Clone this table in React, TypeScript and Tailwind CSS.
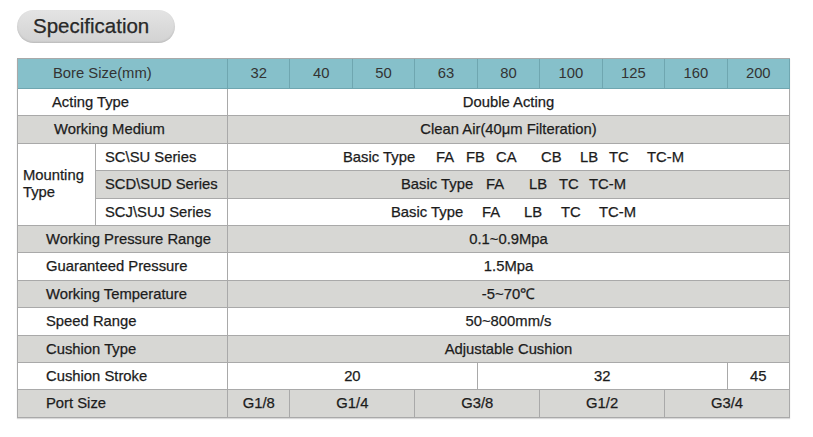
import React from "react";

const bores = ["32", "40", "50", "63", "80", "100", "125", "160", "200"];

const line = "border-r border-b border-[#a9a9a9]";
const gray = "bg-[#d7d7d4]";

function Label({ text, bg, pl = "pl-[28px]" }: { text: string; bg: string; pl?: string }) {
  return (
    <div className={`col-span-2 flex items-center ${pl} ${bg} ${line}`}>{text}</div>
  );
}

function Value({ text, bg }: { text: string; bg: string }) {
  return <div className={`col-span-9 flex items-center justify-center ${bg} ${line}`}>{text}</div>;
}

function Types({ items, start }: { items: [string, number][]; start: number }) {
  // items: [text, x position on the page]
  return (
    <div className="relative h-full">
      {items.map(([t, x]) => (
        <span key={t + x} className="absolute top-1/2 -translate-y-1/2 whitespace-nowrap" style={{ left: x - start }}>
          {t}
        </span>
      ))}
    </div>
  );
}

export default function App() {
  return (
    <div className="w-[813px] h-[437px] bg-white text-[#1c1c1c] text-[14.8px] [-webkit-text-stroke:0.25px_#1c1c1c] font-['Liberation_Sans',Arial,sans-serif]">
      <div className="pt-[10px] pl-[17px]">
        <div className="w-[158px] h-[33px] rounded-full bg-gradient-to-b from-[#e4e4e4] to-[#d2d2d2] shadow-[inset_0_-1px_2px_rgba(0,0,0,0.12)] flex items-center pl-[16px] text-[20.5px] text-[#2a2a2a]">
          Specification
        </div>
      </div>

      <div className="ml-[17px] mt-[15px] w-[773px] grid grid-cols-[78px_132px_repeat(9,1fr)] grid-rows-[30px_repeat(12,27.4px)] border-l border-t border-[#a9a9a9] shadow-[0_1px_1px_rgba(0,0,0,0.15)]">
        {/* header */}
        <div className="col-span-2 flex items-center pl-[35px] bg-[#86c0ca] border-r border-b border-[#6fa6b0] text-[#333] [-webkit-text-stroke:0px]">
          Bore Size(mm)
        </div>
        {bores.map((b) => (
          <div key={b} className="flex items-center justify-center bg-[#86c0ca] border-r border-b border-[#6fa6b0] text-[#333] [-webkit-text-stroke:0px]">
            {b}
          </div>
        ))}

        <Label text="Acting Type" bg="bg-white" pl="pl-[34px]" />
        <Value text="Double Acting" bg="bg-white" />

        <Label text="Working Medium" bg={gray} pl="pl-[36px]" />
        <Value text="Clean Air(40μm Filteration)" bg={gray} />

        {/* mounting type */}
        <div className={`row-span-3 flex items-center pl-[5px] leading-[17px] bg-white ${line}`}>
          Mounting
          <br />
          Type
        </div>
        <div className={`flex items-center pl-[9px] bg-white ${line}`}>SC\SU Series</div>
        <div className={`col-span-9 bg-white ${line}`}>
          <Types
            start={227}
            items={[
              ["Basic Type", 342],
              ["FA", 435],
              ["FB", 465],
              ["CA", 495],
              ["CB", 540],
              ["LB", 579],
              ["TC", 608],
              ["TC-M", 646],
            ]}
          />
        </div>
        <div className={`flex items-center pl-[9px] ${gray} ${line}`}>SCD\SUD Series</div>
        <div className={`col-span-9 ${gray} ${line}`}>
          <Types
            start={227}
            items={[
              ["Basic Type", 400],
              ["FA", 485],
              ["LB", 528],
              ["TC", 558],
              ["TC-M", 588],
            ]}
          />
        </div>
        <div className={`flex items-center pl-[9px] bg-white ${line}`}>SCJ\SUJ Series</div>
        <div className={`col-span-9 bg-white ${line}`}>
          <Types
            start={227}
            items={[
              ["Basic Type", 390],
              ["FA", 481],
              ["LB", 523],
              ["TC", 560],
              ["TC-M", 598],
            ]}
          />
        </div>

        <Label text="Working Pressure Range" bg={gray} />
        <Value text="0.1~0.9Mpa" bg={gray} />

        <Label text="Guaranteed Pressure" bg="bg-white" />
        <Value text="1.5Mpa" bg="bg-white" />

        <Label text="Working Temperature" bg={gray} />
        <Value text="-5~70℃" bg={gray} />

        <Label text="Speed Range" bg="bg-white" />
        <Value text="50~800mm/s" bg="bg-white" />

        <Label text="Cushion Type" bg={gray} />
        <Value text="Adjustable Cushion" bg={gray} />

        <Label text="Cushion Stroke" bg="bg-white" />
        <div className={`col-span-4 flex items-center justify-center bg-white ${line}`}>20</div>
        <div className={`col-span-4 flex items-center justify-center bg-white ${line}`}>32</div>
        <div className={`flex items-center justify-center bg-white ${line}`}>45</div>

        <Label text="Port Size" bg={gray} />
        <div className={`flex items-center justify-center ${gray} ${line}`}>G1/8</div>
        <div className={`col-span-2 flex items-center justify-center ${gray} ${line}`}>G1/4</div>
        <div className={`col-span-2 flex items-center justify-center ${gray} ${line}`}>G3/8</div>
        <div className={`col-span-2 flex items-center justify-center ${gray} ${line}`}>G1/2</div>
        <div className={`col-span-2 flex items-center justify-center ${gray} ${line}`}>G3/4</div>
      </div>
    </div>
  );
}
